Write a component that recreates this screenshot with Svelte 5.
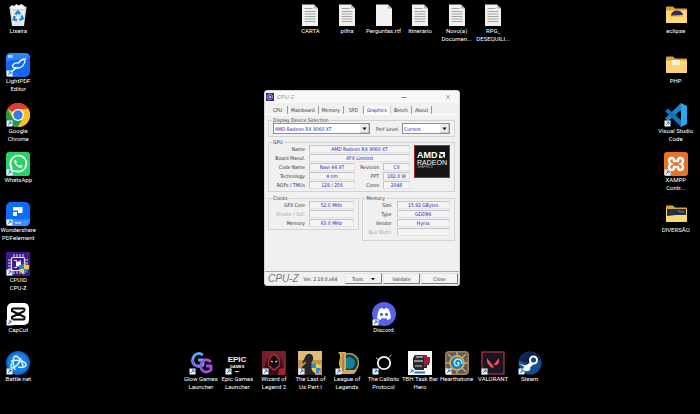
<!--
  Desktop with shortcut icons and an open CPU-Z window
-->

<script lang="ts">
  type Item = { icon: string; label: string; col: number; row: number; shortcut?: boolean };
  type Field = { label: string; value: string; wide?: boolean; muted?: boolean };

  const items: Item[] = [
    { icon: 'bin', label: 'Lixeira', col: 1, row: 1 },
    { icon: 'lightpdf', label: 'LightPDF\nEditor', col: 1, row: 2, shortcut: true },
    { icon: 'chrome', label: 'Google\nChrome', col: 1, row: 3, shortcut: true },
    { icon: 'whatsapp', label: 'WhatsApp', col: 1, row: 4, shortcut: true },
    { icon: 'pdfelement', label: 'Wondershare\nPDFelement', col: 1, row: 5, shortcut: true },
    { icon: 'cpuz', label: 'CPUID\nCPU-Z', col: 1, row: 6, shortcut: true },
    { icon: 'capcut', label: 'CapCut', col: 1, row: 7, shortcut: true },
    { icon: 'battlenet', label: 'Battle.net', col: 1, row: 8, shortcut: true },
    { icon: 'doc', label: 'CARTA', col: 9, row: 1 },
    { icon: 'doc', label: 'pilha', col: 10, row: 1 },
    { icon: 'blank', label: 'Perguntas.rtf', col: 11, row: 1 },
    { icon: 'doc', label: 'Itinerario', col: 12, row: 1 },
    { icon: 'doc', label: 'Novo(a)\nDocumen...', col: 13, row: 1 },
    { icon: 'doc', label: 'RPG_\nDESEQUILI...', col: 14, row: 1 },
    { icon: 'folder-eclipse', label: 'eclipse', col: 19, row: 1 },
    { icon: 'folder-php', label: 'PHP', col: 19, row: 2 },
    { icon: 'vscode', label: 'Visual Studio\nCode', col: 19, row: 3, shortcut: true },
    { icon: 'xampp', label: 'XAMPP\nContr...', col: 19, row: 4, shortcut: true },
    { icon: 'folder-fun', label: 'DIVERSÃO', col: 19, row: 5 },
    { icon: 'discord', label: 'Discord', col: 11, row: 7, shortcut: true },
    { icon: 'glow', label: 'Glow Games\nLauncher', col: 6, row: 8, shortcut: true },
    { icon: 'epic', label: 'Epic Games\nLauncher', col: 7, row: 8, shortcut: true },
    { icon: 'wizard', label: 'Wizard of\nLegend 2', col: 8, row: 8, shortcut: true },
    { icon: 'tlou', label: 'The Last of\nUs Part I', col: 9, row: 8, shortcut: true },
    { icon: 'league', label: 'League of\nLegends', col: 10, row: 8, shortcut: true },
    { icon: 'callisto', label: 'The Callisto\nProtocol', col: 11, row: 8, shortcut: true },
    { icon: 'tbh', label: 'TBH Task Bar\nHero', col: 12, row: 8, shortcut: true },
    { icon: 'hearthstone', label: 'Hearthstone', col: 13, row: 8, shortcut: true },
    { icon: 'valorant', label: 'VALORANT', col: 14, row: 8, shortcut: true },
    { icon: 'steam', label: 'Steam', col: 15, row: 8, shortcut: true }
  ];

  const tabs = ['CPU', 'Mainboard', 'Memory', 'SPD', 'Graphics', 'Bench', 'About'];

  const gpu: Field[] = [
    { label: 'Name', value: 'AMD Radeon RX 9060 XT', wide: true },
    { label: 'Board Manuf.', value: 'XFX Limited', wide: true },
    { label: 'Code Name', value: 'Navi 44 XT' },
    { label: 'Revision', value: 'C0' },
    { label: 'Technology', value: '4 nm' },
    { label: 'PPT', value: '182.0 W' },
    { label: 'ROPs / TMUs', value: '128 / 256' },
    { label: 'Cores', value: '2048' }
  ];

  const clocks: Field[] = [
    { label: 'GFX Core', value: '52.0 MHz' },
    { label: 'Shader / SoC', value: '', muted: true },
    { label: 'Memory', value: '63.0 MHz' }
  ];

  const memory: Field[] = [
    { label: 'Size', value: '15.92 GBytes' },
    { label: 'Type', value: 'GDDR6' },
    { label: 'Vendor', value: 'Hynix' },
    { label: 'Bus Width', value: '', muted: true }
  ];

  let activeTab = $state('Graphics');
  let open = $state(true);
</script>

{#snippet folder()}
  <path d="M2 4.500q0-1 1-1h6l2 2h11q1 0 1 1V10H2z" fill="#d9a334" />
  <path d="M2 7.500h21V19q0 1-1 1H3q-1 0-1-1z" fill="#ffd96c" />
{/snippet}

{#snippet chip()}
  <rect width="24" height="24" fill="#3d1a86" />
  <g stroke="#e6dcfa" fill="none">
    <path d="M8 2v4M11 2v4M14 2v4M17 2v4M8 18v4M11 18v4M14 18v4M2 8h4M2 11h4M2 14h4M2 17h4M18 8h4M18 11h4M18 14h4" />
    <rect x="5.500" y="5.500" width="13" height="13" rx="1" stroke-width="1.200" />
    <path d="M8 8.500h3M8 15.500h3M14 8v2M15 14h2" />
  </g>
  <rect x="10" y="9.500" width="5" height="5" fill="#fff" />
{/snippet}

{#snippet glyph(icon: string)}
  {#if icon === 'bin'}
    <path d="M3.500 4h17l-2.500 19H6z" fill="#dfe3e6" />
    <path d="M3.500 4h17l-.3 2.500H3.800z" fill="#aeb5ba" />
    <path d="M4 4l2-2 2 1 2.500-2 2 1.500 3-1.500 2 1.500L20 4l-1 2H5z" fill="#f4f4f4" />
    <path d="M6 7l1.500 14M18 7l-1.500 14" stroke="#fff" fill="none" />
    <g fill="none" stroke="#1683d8" stroke-width="2.200">
      <path d="M9.500 11.500L12 8.500l2 2.500" />
      <path d="M15.500 12.500l1.300 3-3.300 1.500" />
      <path d="M11 17.200l-3.400-.7 1.200-3.300" />
    </g>
  {:else if icon === 'lightpdf'}
    <rect width="24" height="24" rx="5" fill="#1268f3" />
    <path d="M0 8V5q0-5 5-5h14q5 0 5 5z" fill="#2a86ff" />
    <path d="M2 2h5v3H2z" fill="#9cc8ff" />
    <path d="M6 19q2-4 6-4 6 0 7.500-9-5 .5-7 4-5-.5-6 3 0 2 4 1.500" fill="none" stroke="#fff" stroke-width="1.300" />
    <path d="M18.500 5l2 1-1.500 2z" fill="#f075a4" />
  {:else if icon === 'chrome'}
    <circle cx="12" cy="12" r="12" fill="#fbc116" />
    <path d="M12 12L1.600 6A12 12 0 0 1 22.400 6H12z" fill="#e33b2e" />
    <path d="M1.600 6A12 12 0 0 0 12 24l5.200-9L12 12 6.800 15z" fill="#269a4b" />
    <path d="M22.400 6H12l5.200 9L12 24A12 12 0 0 0 22.400 6z" fill="#fbc116" />
    <circle cx="12" cy="12" r="6" fill="#fff" />
    <circle cx="12" cy="12" r="4.700" fill="#347be8" />
  {:else if icon === 'whatsapp'}
    <rect width="24" height="24" rx="3" fill="#2bd366" />
    <path d="M4.500 20l1.200-4A8 8 0 1 1 9 18.800z" fill="none" stroke="#fff" stroke-width="1.700" />
    <path d="M9.300 7.500q-2 1.200-.4 4 2 3.600 5.100 4.400 2.200.2 2.700-1.800l-2.500-1.300-1.200 1.200q-2-.8-2.900-3l.8-1z" fill="#fff" />
  {:else if icon === 'pdfelement'}
    <rect width="24" height="24" rx="5" fill="#0c6cff" />
    <path d="M0 17.500h24V19q0 5-5 5H5q-5 0-5-5z" fill="#3b92ff" />
    <path d="M7 5h9.500v6H12V8.500H7zM7 10h4v4H7z" fill="#fff" />
    <path d="M9 20l1 1.500 2-1 2 1 1-1.500" fill="none" stroke="#fff" />
  {:else if icon === 'cpuz'}
    {@render chip()}
    <path d="M18 11.500q2 1.500 5 1.500 0 7-5 9.500-5-2.500-5-9.500 3 0 5-1.500z" fill="#2b86d6" />
    <path d="M18 11.500q2 1.500 5 1.500v4h-5zM13.300 17H18v5.500q-4-2-4.700-5.500z" fill="#f6cf39" />
  {:else if icon === 'capcut'}
    <rect x="1" y="1" width="22" height="22" rx="5" fill="#fff" />
    <path d="M18.500 9V7.500q0-1-1-1H7q-1 0-1 1V9l12.500 6v1.500q0 1-1 1H7q-1 0-1-1V15l12.500-6" fill="none" stroke="#080808" stroke-width="2" />
  {:else if icon === 'battlenet'}
    <circle cx="12" cy="12" r="12" fill="#0a68cb" />
    <circle cx="12" cy="12" r="10" fill="#1580e6" />
    <g fill="none" stroke="#d9f3ff" stroke-width="1.500">
      <path d="M9 19C6 12 7 5 10 5c3 1 7 7 7 11" />
      <path d="M5 10c6-2 15 0 15 4 0 2-4 3-8 2" />
      <path d="M15 7c-1 5-6 10-9 10-2-1-1-4 1-6" />
    </g>
  {:else if icon === 'doc' || icon === 'blank'}
    <path d="M4 1.500h12l4 4V23H4z" fill="#f1f1f0" />
    <path d="M16 1.500v4h4z" fill="#b5b5b5" />
    {#if icon === 'doc'}
      <path d="M6.500 5.500h8M6.500 8.500h11M6.500 11h11M6.500 13.500h11M6.500 16h11M6.500 18.500h11" stroke="#a3a3a3" />
    {/if}
  {:else if icon === 'folder-eclipse'}
    {@render folder()}
    <path d="M7 13a6 5 0 0 1 12-1z" fill="#352b61" />
    <path d="M7 13h12" stroke="#f1a13a" />
    <path d="M2 14h21v5q0 1-1 1H3q-1 0-1-1z" fill="#ffdc77" />
  {:else if icon === 'folder-php'}
    {@render folder()}
    <path d="M8 7h8v5H8z" fill="#edf1df" />
    <path d="M2 12h21v7q0 1-1 1H3q-1 0-1-1z" fill="#f9d27a" />
  {:else if icon === 'folder-fun'}
    {@render folder()}
    <path d="M3 7h19v7l-9-1-10 1z" fill="#223152" />
    <path d="M14 8l2 2 2-1 2 2" stroke="#6d7fa8" fill="none" />
    <path d="M2 15l12-2h9v6q0 1-1 1H3q-1 0-1-1z" fill="#ffd76b" />
  {:else if icon === 'vscode'}
    <path d="M17 0l6 3v18l-6 3z" fill="#2aa5f0" />
    <path d="M17 0v7L4 18l-3-2.500z" fill="#1587d1" />
    <path d="M1 8l3-2.500L17 17v7z" fill="#0d73ba" />
  {:else if icon === 'xampp'}
    <rect width="24" height="24" rx="3" fill="#e87328" />
    <path d="M8 6q-3 0-3 3 0 2 2 3-2 1-2 3 0 3 3 3 2 0 2-3h4q0 3 2 3 3 0 3-3 0-2-2-3 2-1 2-3 0-3-3-3-2 0-2 3h-4q0-3-2-3z" fill="none" stroke="#fff" stroke-width="2.400" />
  {:else if icon === 'discord'}
    <circle cx="12" cy="12" r="12" fill="#5762e8" />
    <path d="M7.500 7q2-1 3-1l.5 1h2l.5-1q1 0 3 1 2.500 4 2.500 9-1.500 1.500-3.500 2l-1-1.700h-5L8.500 18Q6.500 17.500 5 16q0-5 2.500-9z" fill="#fff" />
    <ellipse cx="9.500" cy="12.500" rx="1.500" ry="1.700" fill="#5762e8" />
    <ellipse cx="14.500" cy="12.500" rx="1.500" ry="1.700" fill="#5762e8" />
  {:else if icon === 'glow'}
    <g fill="none" stroke-width="2.800">
      <path d="M14 4Q10 1 6 4q-4 4-1 9 4 4 9 1V9H9" stroke="#5aa7ef" />
      <path d="M22 11q-4-4-8-1-4 4-1 9 4 4 9 0v-4h-5" stroke="#a74de0" />
      <path d="M3 9q1 6 6 6" stroke="#8a5ae8" />
    </g>
  {:else if icon === 'epic'}
    <g fill="#f4f4f4" font-family="Liberation Sans, sans-serif" font-weight="700" text-anchor="middle">
      <text x="12" y="11" font-size="8">EPIC</text>
      <text x="12" y="17" font-size="4">GAMES</text>
    </g>
    <path d="M9 20h6l-3 1.500z" fill="#ddd" />
  {:else if icon === 'wizard'}
    <rect width="24" height="24" fill="#74202a" />
    <path d="M0 24L5 8 12 2l7 6 5 16z" fill="#33101a" />
    <path d="M12 2Q4 7 6 15l6 5 6-5Q20 7 12 2z" fill="#b52c35" />
    <path d="M12 4Q6 8 7 14l5 4 5-4q1-6-5-10z" fill="#160b14" />
    <path d="M8.500 10l2.500 1M15.500 10L13 11" stroke="#eaf4b0" />
    <path d="M16 24l1-6 6-2v8z" fill="#9a252d" />
  {:else if icon === 'tlou'}
    <rect width="24" height="24" fill="#c9924b" />
    <path d="M0 0h24v9H0z" fill="#dfbc79" />
    <path d="M7 6q2-4 6-3 3 2 2 6l-2 3 4 4v8H2q0-7 4-10l2-2q-2-3-1-6z" fill="#27272a" />
    <path d="M8 7L5 12" stroke="#27272a" stroke-width="2" />
    <path d="M18 12q2 1.500 5 1.500 0 6-5 9-5-3-5-9 3 0 5-1.500z" fill="#258bdc" />
    <path d="M18 12q2 1.500 5 1.500V17h-5zM13.300 17H18v5.500q-4-2-4.700-5.500z" fill="#f6cf39" />
  {:else if icon === 'league'}
    <circle cx="14" cy="12" r="9.500" fill="#0c3b48" stroke="#c69b48" stroke-width="1.500" />
    <circle cx="14" cy="12" r="6" fill="#178195" />
    <path d="M3 1h8v18h11l-3 4H3l2-3V4z" fill="#d3a85a" />
    <path d="M8 3v17" stroke="#8b6229" />
  {:else if icon === 'callisto'}
    <circle cx="12" cy="12" r="6.200" fill="none" stroke="#f5f5f5" stroke-width="1.800" />
    <path d="M17 6l2.500-2M7 18l-2 2M6 8L4 7" stroke="#bbb" />
  {:else if icon === 'tbh'}
    <rect width="24" height="24" fill="#fafafa" />
    <path d="M7 4h8l3 2v3h3v5h-2v3h-3v2H7l-2-3V7z" fill="#2b2930" />
    <path d="M8 5h7v2H8zM6 9h9v2H6z" fill="#8d9096" />
    <path d="M16 4h3v2h3v6h-2l-2 3h-2v-5z" fill="#a01f36" />
    <path d="M7 14h7v2H7z" fill="#777a80" />
    <path d="M6 21.500h11" stroke="#2579c8" stroke-width="2" />
  {:else if icon === 'hearthstone'}
    <rect width="24" height="24" rx="4" fill="#a8803f" />
    <rect x="1.500" y="1.500" width="21" height="21" rx="3" fill="#555b70" />
    <path d="M12 1v4M12 19v4M1 12h4M19 12h4M3 3l4 4M21 3l-4 4M3 21l4-4M21 21l-4-4" stroke="#d6a443" stroke-width="1.500" />
    <circle cx="12" cy="12" r="7" fill="#1e78b4" stroke="#d9a949" stroke-width="1.800" />
    <path d="M12 12q2-1 2 1-1 3-4 1-2-4 2-6 5 0 5 5" fill="none" stroke="#a3ecff" stroke-width="1.600" />
  {:else if icon === 'valorant'}
    <rect x="1" y="1" width="22" height="22" fill="#191624" stroke="#a3323e" stroke-width="1.300" />
    <path d="M6 7l7.500 9.500H10l-4-5zM18 7v4.500l-2 2.500h-3.500z" fill="#f0505a" />
  {:else if icon === 'steam'}
    <circle cx="12" cy="12" r="11.500" fill="#12508f" />
    <path d="M1 9A11.500 11.500 0 0 1 23 9L12 14z" fill="#12244d" />
    <path d="M0 12l8 3 5-5 3 3-6 5" fill="#fff" />
    <circle cx="15.500" cy="9" r="4.500" fill="#fff" />
    <circle cx="15.500" cy="9" r="2.500" fill="#17406f" />
    <circle cx="9" cy="17" r="3.300" fill="#fff" />
  {/if}
{/snippet}

{#snippet field(f: Field)}
  <dt class:muted={f.muted}>{f.label}</dt>
  <dd class:wide={f.wide}>{f.value}</dd>
{/snippet}

{#snippet arrow()}
  <svg class="arrow" viewBox="0 0 8 8" aria-hidden="true">
    <rect width="8" height="8" fill="#ececec" />
    <path d="M0 8h8V0" fill="none" stroke="#a8a8a8" />
    <path d="M2 3h4L4 5.500z" fill="#111" />
  </svg>
{/snippet}

<main class="desktop">
  {#each items as item}
    <button class="item" style="grid-column: {item.col}; grid-row: {item.row};">
      <svg viewBox="0 0 24 24" aria-hidden="true">
        {@render glyph(item.icon)}
        {#if item.shortcut}
          <rect x="0.500" y="17.500" width="6" height="6" fill="#f4f9ff" />
          <path d="M2 22l3-3M2.800 19H5v2.200" fill="none" stroke="#1b75c9" />
        {/if}
      </svg>
      <span>{item.label}</span>
    </button>
  {/each}

  {#if open}
    <section class="window" aria-label="CPU-Z">
      <header>
        <svg viewBox="0 0 24 24" aria-hidden="true">{@render chip()}</svg>
        <h1>CPU-Z</h1>
        <button class="caption" aria-label="Minimize">
          <svg viewBox="0 0 8 8"><path d="M1.500 4.500h5" stroke="#8a8a8a" /></svg>
        </button>
        <button class="caption close" aria-label="Close window" onclick={() => (open = false)}>
          <svg viewBox="0 0 8 8"><path d="M2 2l4 4M6 2L2 6" stroke="#8a8a8a" stroke-width="0.800" /></svg>
        </button>
      </header>

      <div class="tabs" role="tablist">
        {#each tabs as tab}
          <button
            role="tab"
            aria-selected={activeTab === tab}
            class:active={activeTab === tab}
            onclick={() => (activeTab = tab)}
          >{tab}</button>
        {/each}
      </div>

      <div class="page">
        <fieldset class="device">
          <legend>Display Device Selection</legend>
          <div class="select">
            <select aria-label="Display device">
              <option>AMD Radeon RX 9060 XT</option>
            </select>
            {@render arrow()}
          </div>
          <label for="perf">Perf Level</label>
          <div class="select small">
            <select id="perf">
              <option>Current</option>
            </select>
            {@render arrow()}
          </div>
        </fieldset>

        <fieldset class="gpu">
          <legend>GPU</legend>
          <dl>
            {#each gpu as f}{@render field(f)}{/each}
          </dl>
          <div class="badge">
            <strong>AMD<svg viewBox="0 0 8 8" aria-hidden="true"><path d="M0 0h8v8L5.500 5.500v-3h-3zM0 4l2-2v4h4L4 8H0z" fill="#fff" /></svg></strong>
            <span>RADEON</span>
            <small>GRAPHICS</small>
          </div>
        </fieldset>

        <div class="columns">
          <fieldset>
            <legend>Clocks</legend>
            <dl>
              {#each clocks as f}{@render field(f)}{/each}
            </dl>
          </fieldset>
          <fieldset class="memory">
            <legend>Memory</legend>
            <dl>
              {#each memory as f}{@render field(f)}{/each}
            </dl>
          </fieldset>
        </div>
      </div>

      <footer>
        <em>CPU-Z</em>
        <span class="version">Ver. 2.18.0.x64</span>
        <button>Tools <svg viewBox="0 0 4 4" aria-hidden="true"><path d="M0 1h4L2 3.500z" fill="#111" /></svg></button>
        <button>Validate</button>
        <button onclick={() => (open = false)}>Close</button>
      </footer>
    </section>
  {/if}
</main>

<style>
  :global(body) {
    margin: 0;
    background: #000;
  }

  button,
  select {
    font: inherit;
    color: inherit;
    border: 0;
    border-radius: 0;
    margin: 0;
    padding: 0;
    background: none;
  }

  svg {
    display: block;
  }

  .desktop {
    position: relative;
    box-sizing: border-box;
    min-height: 100vh;
    padding: 0 6px 16px 0;
    display: grid;
    grid-template-columns: repeat(19, minmax(0, 1fr));
    grid-template-rows: repeat(8, minmax(0, 1fr));
    background: #000;
    overflow: hidden;
  }

  /* Desktop shortcuts */
  .item {
    display: flex;
    flex-direction: column;
    align-items: center;
    padding-top: 3px;
    font: 6px/8px Roboto, "Open Sans", sans-serif;
    color: #fff;
    text-align: center;
  }

  .item svg {
    width: 24px;
    height: 24px;
    flex: none;
  }

  .item span {
    white-space: pre;
  }

  /* CPU-Z window */
  .window {
    position: absolute;
    left: 264px;
    top: 90px;
    width: 196px;
    box-sizing: border-box;
    border: 1px solid #d4d4d4;
    border-radius: 3px;
    background: #f0f0f0;
    color: #333;
    font: 5px/8px "DejaVu Sans Condensed", "DejaVu Sans", sans-serif;
    overflow: hidden;
  }

  header {
    display: flex;
    align-items: center;
    height: 12px;
    padding: 0 1px;
    background: #f8f8f8;
  }

  header > svg {
    width: 8px;
    height: 8px;
  }

  h1 {
    flex: 1;
    margin: 0 0 0 3px;
    font: 6px/12px "Open Sans", sans-serif;
    color: #8c8c8c;
  }

  .caption {
    width: 20px;
  }

  .caption svg {
    width: 8px;
    height: 8px;
    margin: 0 auto;
  }

  .close {
    margin-left: 24px;
  }

  .tabs {
    display: flex;
    padding: 3px 3px 0;
  }

  .tabs button {
    min-width: 20px;
    padding: 0 3px;
    border-right: 1px solid #9a9a9a;
  }

  .tabs .active {
    border-right-color: #c8c8c8;
    background: #f8f8f8;
    color: #1c1cc0;
  }

  .page {
    min-height: 157px;
    padding: 2px 4px 3px 3px;
    border-top: 1px solid #fff;
    box-sizing: border-box;
    display: flex;
    flex-direction: column;
    gap: 2px;
  }

  fieldset {
    min-width: 0;
    margin: 0;
    padding: 0 4px 2px;
    border: 1px solid #d2d2d2;
  }

  legend {
    margin-left: -1px;
    padding: 0 1px;
    line-height: 6px;
  }

  .device {
    display: flex;
    align-items: center;
    gap: 4px;
  }

  .device label {
    margin-left: auto;
  }

  .select {
    position: relative;
    width: 97px;
  }

  .select.small {
    width: 48px;
  }

  select {
    display: block;
    appearance: none;
    width: 100%;
    height: 11px;
    padding: 0 9px 0 1px;
    border: 1px solid #8f8f8f;
    background: #fff;
    color: #1c1cc0;
  }

  .arrow {
    position: absolute;
    top: 1px;
    right: 1px;
    width: 9px;
    height: 9px;
    pointer-events: none;
  }

  dl {
    display: grid;
    grid-template-columns: 32px 1fr;
    gap: 1px 4px;
    margin: 0;
  }

  dt {
    text-align: right;
    white-space: nowrap;
  }

  .muted {
    color: #a8a8a8;
  }

  dd {
    height: 8px;
    margin: 0;
    box-sizing: border-box;
    border: 1px solid #e2e2e2;
    border-top-color: #c4c4c4;
    border-left-color: #c4c4c4;
    line-height: 7px;
    text-align: center;
    white-space: nowrap;
    color: #1c1cc0;
    background: #f4f4f4;
  }

  .gpu {
    display: flex;
    align-items: flex-start;
    gap: 4px;
  }

  .gpu dl {
    flex: 1;
    grid-template-columns: 32px 46px 20px 1fr;
  }

  .wide {
    grid-column: span 3;
  }

  .badge {
    width: 36px;
    height: 33px;
    box-sizing: border-box;
    padding: 5px 2px 0;
    border: 1px solid #a82a30;
    background: #151515;
    color: #fff;
    font-family: "Liberation Sans", sans-serif;
  }

  .badge strong {
    display: flex;
    align-items: center;
    gap: 1px;
    font-size: 9px;
    line-height: 8px;
  }

  .badge svg {
    width: 6px;
    height: 6px;
  }

  .badge span {
    display: block;
    font-size: 7px;
    line-height: 7px;
  }

  .badge small {
    display: block;
    font-size: 3px;
    line-height: 3px;
    color: #aaa;
  }

  .columns {
    display: grid;
    grid-template-columns: 91fr 94fr;
    align-items: start;
    gap: 3px;
    margin-top: 1px;
  }

  .memory {
    padding-bottom: 4px;
  }

  .memory dl {
    grid-template-columns: 25px 1fr;
    gap: 1px 5px;
  }

  footer {
    display: flex;
    align-items: center;
    gap: 1px;
    padding: 1px 1px 1px 3px;
    border-top: 1px solid #a8a8a8;
  }

  footer em {
    font: italic 10px/11px "Liberation Sans", sans-serif;
    color: #777;
  }

  .version {
    flex: 1;
    margin-left: 4px;
    white-space: nowrap;
  }

  footer button {
    width: 37px;
    height: 11px;
    display: flex;
    align-items: center;
    justify-content: center;
    gap: 8px;
    border: 1px solid #e4e4e4;
    border-right-color: #777;
    border-bottom-color: #777;
    background: #f3f3f3;
  }

  footer button svg {
    width: 4px;
    height: 4px;
  }
</style>
